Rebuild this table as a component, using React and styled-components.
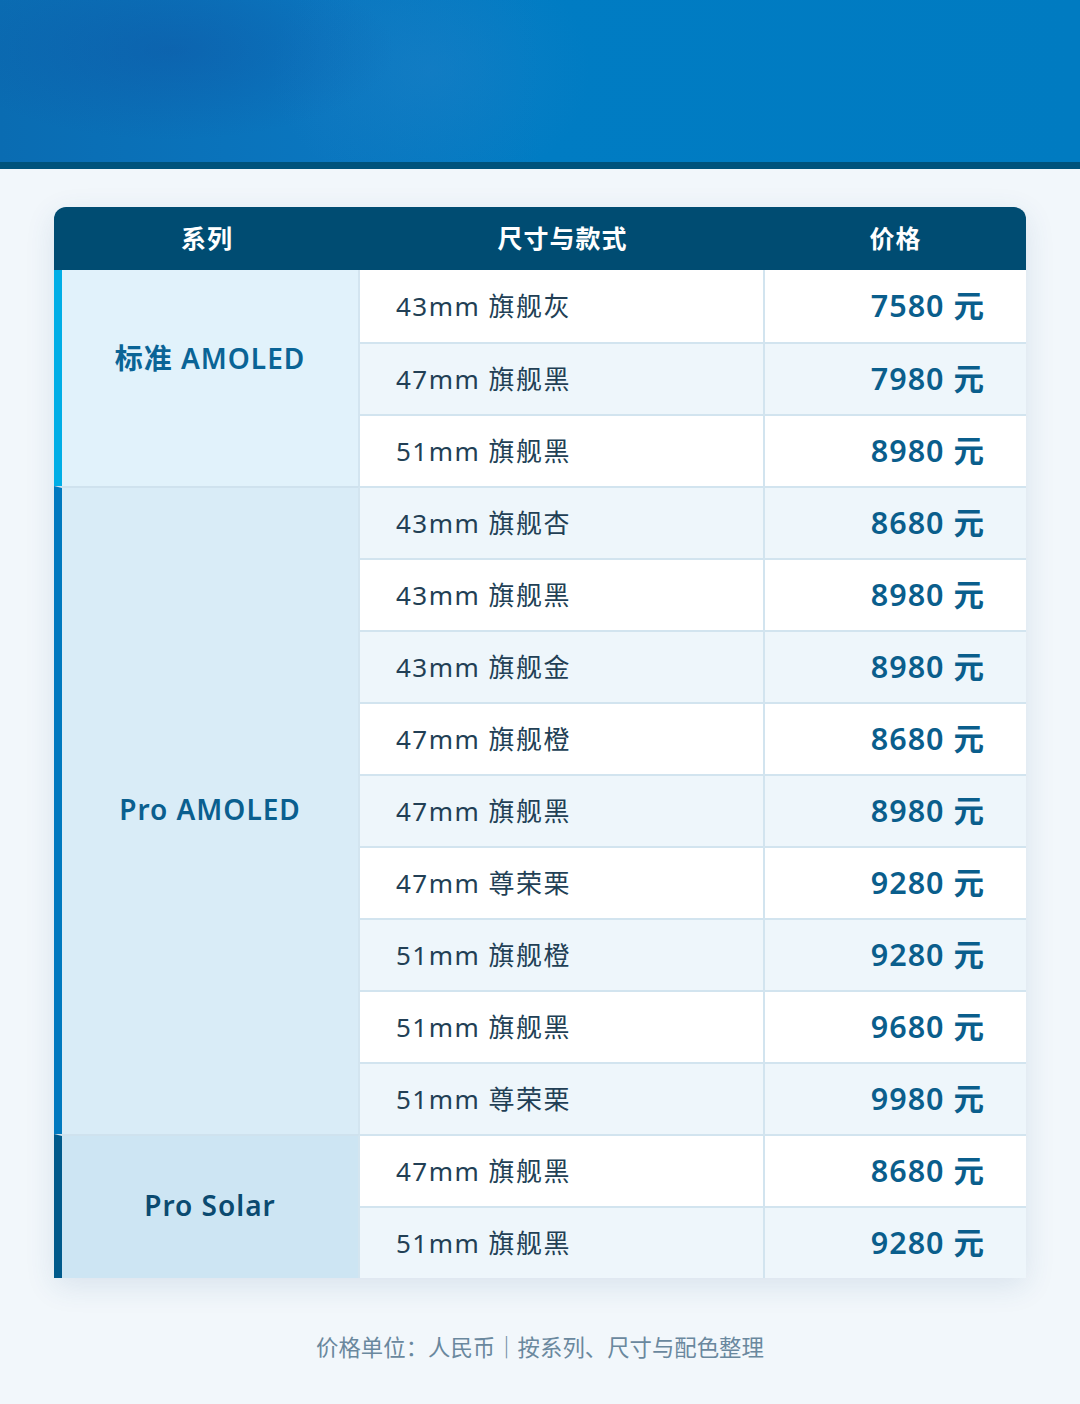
import styled, { createGlobalStyle } from 'styled-components';

const GlobalStyle = createGlobalStyle`
  html, body {
    margin: 0;
    padding: 0;
    background: #f2f7fb;
  }
  body {
    font-family: "Noto Sans", "Noto Sans CJK SC", sans-serif;
  }
`;

const groups = [
  {
    name: '标准 AMOLED',
    tone: 'light',
    lift: true,
    items: [
      ['43mm 旗舰灰', '7580 元'],
      ['47mm 旗舰黑', '7980 元'],
      ['51mm 旗舰黑', '8980 元'],
    ],
  },
  {
    name: 'Pro AMOLED',
    tone: 'mid',
    items: [
      ['43mm 旗舰杏', '8680 元'],
      ['43mm 旗舰黑', '8980 元'],
      ['43mm 旗舰金', '8980 元'],
      ['47mm 旗舰橙', '8680 元'],
      ['47mm 旗舰黑', '8980 元'],
      ['47mm 尊荣栗', '9280 元'],
      ['51mm 旗舰橙', '9280 元'],
      ['51mm 旗舰黑', '9680 元'],
      ['51mm 尊荣栗', '9980 元'],
    ],
  },
  {
    name: 'Pro Solar',
    tone: 'dark',
    items: [
      ['47mm 旗舰黑', '8680 元'],
      ['51mm 旗舰黑', '9280 元'],
    ],
  },
];

const tones = {
  light: { bg: '#e1f2fb', bar: '#00aee6', text: '#0a6496' },
  mid: { bg: '#d9ecf7', bar: '#0079bf', text: '#0a5f8f' },
  dark: { bg: '#cde5f3', bar: '#005a8b', text: '#0b4a70' },
};

export default function App() {
  let index = 0;
  let rowStart = 2;
  return (
    <Page>
      <GlobalStyle />
      <Banner />
      <Content>
        <Table>
          <HeadCell>系列</HeadCell>
          <HeadCell>尺寸与款式</HeadCell>
          <HeadCell>价格</HeadCell>
          {groups.map((g, gi) => {
            const start = rowStart;
            rowStart += g.items.length;
            return [
              <SeriesCell
                key={'s' + gi}
                $tone={g.tone}
                $lift={g.lift}
                $first={gi === 0}
                style={{ gridRow: `${start} / span ${g.items.length}` }}
              >
                {g.name}
              </SeriesCell>,
              ...g.items.map(([spec, price], ii) => {
                const alt = index % 2 === 1;
                const top = index === 0;
                index += 1;
                return [
                  <SpecCell key={`a${gi}-${ii}`} $alt={alt} $top={top}>
                    {spec}
                  </SpecCell>,
                  <PriceCell key={`b${gi}-${ii}`} $alt={alt} $top={top}>
                    {price}
                  </PriceCell>,
                ];
              }),
            ];
          })}
        </Table>
        <Footnote>价格单位：人民币｜按系列、尺寸与配色整理</Footnote>
      </Content>
    </Page>
  );
}

const Page = styled.div`
  min-height: 1404px;
  background: #f2f7fb;
`;

const Banner = styled.div`
  height: 162px;
  border-bottom: 7px solid #00537c;
  background:
    radial-gradient(ellipse 300px 120px at 170px 50px, rgba(16, 80, 160, 0.4), transparent 75%),
    radial-gradient(ellipse 200px 160px at 430px 70px, rgba(40, 130, 200, 0.35), transparent 80%),
    linear-gradient(90deg, #0a6cb2 0%, #0a76bf 30%, #007cc3 50%, #007bc1 100%);
`;

const Content = styled.div`
  padding: 38px 54px 0;
  display: flex;
  flex-direction: column;
  align-items: center;
`;

const Table = styled.div`
  width: 972px;
  display: grid;
  grid-template-columns: 306px 405px 261px;
  grid-auto-rows: 72px;
  grid-template-rows: 63px;
  border-radius: 12px 12px 0 0;
  overflow: hidden;
  background: #ffffff;
  box-shadow: 0 8px 30px rgba(30, 80, 130, 0.12);
`;

const HeadCell = styled.div`
  background: #004c72;
  color: #ffffff;
  font-family: "Noto Sans CJK SC", sans-serif;
  font-size: 25px;
  font-weight: 700;
  display: flex;
  align-items: center;
  justify-content: center;
  letter-spacing: 1px;
  padding-bottom: 4px;
`;

const SeriesCell = styled.div`
  grid-column: 1;
  background: ${(p) => tones[p.$tone].bg};
  color: ${(p) => tones[p.$tone].text};
  border-left: 8px solid ${(p) => tones[p.$tone].bar};
  border-top: ${(p) => (p.$first ? 'none' : '2px solid #cfe2ee')};
  border-right: 2px solid #d3e5f0;
  display: flex;
  align-items: center;
  justify-content: center;
  padding-bottom: ${(p) => (p.$lift ? '42px' : '4px')};
  font-size: 28px;
  font-weight: 600;
  letter-spacing: 1px;
  box-sizing: border-box;
`;

const Cell = styled.div`
  background: ${(p) => (p.$alt ? '#eef6fb' : '#ffffff')};
  border-top: ${(p) => (p.$top ? 'none' : '2px solid #d2e4ef')};
  display: flex;
  align-items: center;
  padding-bottom: 2px;
  box-sizing: border-box;
`;

const SpecCell = styled(Cell)`
  grid-column: 2;
  padding-left: 36px;
  font-size: 26px;
  letter-spacing: 1.5px;
  color: #223f55;
  border-right: 2px solid #d2e4ef;
`;

const PriceCell = styled(Cell)`
  grid-column: 3;
  justify-content: flex-end;
  padding-right: 41px;
  padding-bottom: 4px;
  font-size: 30.5px;
  font-weight: 600;
  letter-spacing: 1px;
  color: #0a5e8c;
`;

const Footnote = styled.div`
  margin-top: 52px;
  font-family: "Noto Sans CJK SC", sans-serif;
  font-size: 22.4px;
  color: #6a889e;
`;
